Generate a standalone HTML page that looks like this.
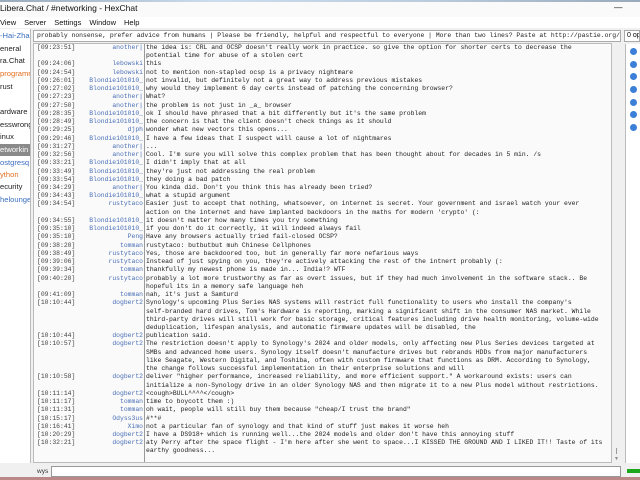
<!DOCTYPE html>
<html><head><meta charset="utf-8"><style>
*{margin:0;padding:0;box-sizing:border-box}
html,body{width:640px;height:480px;overflow:hidden}
body{background:#f0f0f0;font-family:"Liberation Sans",sans-serif;position:relative}
.abs{position:absolute}
#title{left:0;top:0;width:640px;height:17px;background:#fafafa;font-size:8.5px;color:#111;line-height:17px}
#title:before{content:"";position:absolute;left:0;top:0;width:640px;height:2px;background:linear-gradient(90deg,#9ab,#cde,#bcd,#9ab)}
#menu{left:0;top:17px;width:640px;height:11px;background:#fff;font-size:7.5px;line-height:11px;color:#111}
#menu span{margin-right:8px}
#side{left:0;top:29px;width:31px;height:434px;background:#fff;border-right:1px solid #bbb;font-size:7.6px;color:#222;overflow:hidden}
#side div{position:absolute;left:0;height:12px;line-height:12px;white-space:nowrap;width:31px}
#topic{left:33px;top:30px;width:588px;height:12px;background:#fff;border:1px solid #aaa;font-family:"Liberation Mono",monospace;font-size:6.4px;line-height:10px;padding-left:3px;color:#222;white-space:nowrap;overflow:hidden}
#ops{left:624px;top:30px;width:16px;height:12px;background:#fff;border:1px solid #aaa;font-size:7px;line-height:10px;padding-left:2px;white-space:nowrap;overflow:hidden}
#chat{left:33px;top:43px;width:579px;height:420px;background:#fafafa;border:1px solid #bbb}
#sb{left:612px;top:43px;width:10px;height:420px;background:#f0f0f0}
#sep{left:144px;top:44px;width:1px;height:418px;background:#999}
#users{left:625px;top:44px;width:15px;height:419px;background:#fff;border-left:1px solid #bbb}
.dot{position:absolute;left:4px;width:7px;height:7px;border-radius:50%;background:#3b7fd8}
#lines{left:37px;top:44px;width:575px;font-family:"Liberation Mono",monospace;font-size:6.4px;line-height:8.24px;color:#222}
.r{position:relative;height:8.24px}
.t,.n,.m{white-space:pre}
.t{position:absolute;left:0;color:#444}
.n{position:absolute;left:0;width:106px;text-align:right;color:#4a6fb5}
.m{position:absolute;left:109px}
#inp{left:51px;top:466px;width:570px;height:11px;background:#fff;border:1px solid #999}
#nick{left:37px;top:466px;font-size:6.5px;line-height:11px;color:#333}
#green{left:627px;top:469px;width:13px;height:4px;background:#1ca81c}
#task{left:0;top:477px;width:640px;height:3px;background:#b88}
</style></head><body>
<div id="title" class="abs">Libera.Chat / #networking - HexChat<span style="position:absolute;left:614px;top:-1px">—</span></div>
<div id="menu" class="abs"><span>View</span><span>Server</span><span>Settings</span><span>Window</span><span>Help</span></div>
<div id="side" class="abs">
<div style="top:1px;color:#3b6fc0">-Hai-Zhan</div>
<div style="top:14px">eneral</div>
<div style="top:26px">ra.Chat</div>
<div style="top:39px;color:#e07020">programm</div>
<div style="top:52px">rust</div>
<div style="top:77px">ardware</div>
<div style="top:90px">esswrong</div>
<div style="top:102px">inux</div>
<div style="top:115px;background:#8a8a8a;color:#fff">etworkin</div>
<div style="top:128px;color:#3b6fc0">ostgresq</div>
<div style="top:140px;color:#e07020">ython</div>
<div style="top:152px">ecurity</div>
<div style="top:165px;color:#3b6fc0">helounge</div>
</div>
<div id="topic" class="abs">probably nonsense, prefer advice from humans | Please be friendly, helpful and respectful to everyone | More than two lines? Paste at http://pastie.org/</div>
<div id="ops" class="abs">0 op</div>
<div id="chat" class="abs"></div>
<div id="sb" class="abs"><div class="abs" style="left:4px;top:405px;width:1px;height:6px;background:#999"></div><div class="abs" style="left:2px;top:413px;font-size:5px;color:#888">▼</div></div>
<div id="sep" class="abs"></div>
<div id="users" class="abs">
<div class="dot" style="top:4px"></div><div class="dot" style="top:17px"></div><div class="dot" style="top:29px"></div><div class="dot" style="top:42px"></div><div class="dot" style="top:55px"></div><div class="dot" style="top:67px"></div><div class="dot" style="top:80px"></div>
</div>
<div id="lines" class="abs">
<div class="r"><span class="t">[09:23:51]</span><span class="n">another|</span><span class="m">the idea is: CRL and OCSP doesn't really work in practice. so give the option for shorter certs to decrease the</span></div>
<div class="r"><span class="m">potential time for abuse of a stolen cert</span></div>
<div class="r"><span class="t">[09:24:06]</span><span class="n">lebowski</span><span class="m">this</span></div>
<div class="r"><span class="t">[09:24:54]</span><span class="n">lebowski</span><span class="m">not to mention non-stapled ocsp is a privacy nightmare</span></div>
<div class="r"><span class="t">[09:26:01]</span><span class="n">Blondie101010_</span><span class="m">not invalid, but definitely not a great way to address previous mistakes</span></div>
<div class="r"><span class="t">[09:27:02]</span><span class="n">Blondie101010_</span><span class="m">why would they implement 6 day certs instead of patching the concerning browser?</span></div>
<div class="r"><span class="t">[09:27:23]</span><span class="n">another|</span><span class="m">What?</span></div>
<div class="r"><span class="t">[09:27:50]</span><span class="n">another|</span><span class="m">the problem is not just in _a_ browser</span></div>
<div class="r"><span class="t">[09:28:35]</span><span class="n">Blondie101010_</span><span class="m">ok I should have phrased that a bit differently but it's the same problem</span></div>
<div class="r"><span class="t">[09:28:49]</span><span class="n">Blondie101010_</span><span class="m">the concern is that the client doesn't check things as it should</span></div>
<div class="r"><span class="t">[09:29:25]</span><span class="n">djph</span><span class="m">wonder what new vectors this opens...</span></div>
<div class="r"><span class="t">[09:29:46]</span><span class="n">Blondie101010_</span><span class="m">I have a few ideas that I suspect will cause a lot of nightmares</span></div>
<div class="r"><span class="t">[09:31:27]</span><span class="n">another|</span><span class="m">...</span></div>
<div class="r"><span class="t">[09:32:56]</span><span class="n">another|</span><span class="m">Cool. I'm sure you will solve this complex problem that has been thought about for decades in 5 min. /s</span></div>
<div class="r"><span class="t">[09:33:21]</span><span class="n">Blondie101010_</span><span class="m">I didn't imply that at all</span></div>
<div class="r"><span class="t">[09:33:49]</span><span class="n">Blondie101010_</span><span class="m">they're just not addressing the real problem</span></div>
<div class="r"><span class="t">[09:33:54]</span><span class="n">Blondie101010_</span><span class="m">they doing a bad patch</span></div>
<div class="r"><span class="t">[09:34:29]</span><span class="n">another|</span><span class="m">You kinda did. Don't you think this has already been tried?</span></div>
<div class="r"><span class="t">[09:34:43]</span><span class="n">Blondie101010_</span><span class="m">what a stupid argument</span></div>
<div class="r"><span class="t">[09:34:54]</span><span class="n">rustytaco</span><span class="m">Easier just to accept that nothing, whatsoever, on internet is secret. Your government and israel watch your ever</span></div>
<div class="r"><span class="m">action on the internet and have implanted backdoors in the maths for modern 'crypto' (:</span></div>
<div class="r"><span class="t">[09:34:55]</span><span class="n">Blondie101010_</span><span class="m">it doesn't matter how many times you try something</span></div>
<div class="r"><span class="t">[09:35:10]</span><span class="n">Blondie101010_</span><span class="m">if you don't do it correctly, it will indeed always fail</span></div>
<div class="r"><span class="t">[09:35:10]</span><span class="n">Peng</span><span class="m">Have any browsers actually tried fail-closed OCSP?</span></div>
<div class="r"><span class="t">[09:38:20]</span><span class="n">tomman</span><span class="m">rustytaco: butbutbut muh Chinese Cellphones</span></div>
<div class="r"><span class="t">[09:38:49]</span><span class="n">rustytaco</span><span class="m">Yes, those are backdoored too, but in generally far more nefarious ways</span></div>
<div class="r"><span class="t">[09:39:06]</span><span class="n">rustytaco</span><span class="m">Instead of just spying on you, they're actively attacking the rest of the intnert probably (:</span></div>
<div class="r"><span class="t">[09:39:34]</span><span class="n">tomman</span><span class="m">thankfully my newest phone is made in... India!? WTF</span></div>
<div class="r"><span class="t">[09:40:20]</span><span class="n">rustytaco</span><span class="m">probably a lot more trustworthy as far as overt issues, but if they had much involvement in the software stack.. Be</span></div>
<div class="r"><span class="m">hopeful its in a memory safe language heh</span></div>
<div class="r"><span class="t">[09:41:09]</span><span class="n">tomman</span><span class="m">nah, it's just a Samturd</span></div>
<div class="r"><span class="t">[10:10:44]</span><span class="n">dogbert2</span><span class="m">Synology's upcoming Plus Series NAS systems will restrict full functionality to users who install the company's</span></div>
<div class="r"><span class="m">self-branded hard drives, Tom's Hardware is reporting, marking a significant shift in the consumer NAS market. While</span></div>
<div class="r"><span class="m">third-party drives will still work for basic storage, critical features including drive health monitoring, volume-wide</span></div>
<div class="r"><span class="m">deduplication, lifespan analysis, and automatic firmware updates will be disabled, the</span></div>
<div class="r"><span class="t">[10:10:44]</span><span class="n">dogbert2</span><span class="m">publication said.</span></div>
<div class="r"><span class="t">[10:10:57]</span><span class="n">dogbert2</span><span class="m">The restriction doesn't apply to Synology's 2024 and older models, only affecting new Plus Series devices targeted at</span></div>
<div class="r"><span class="m">SMBs and advanced home users. Synology itself doesn't manufacture drives but rebrands HDDs from major manufacturers</span></div>
<div class="r"><span class="m">like Seagate, Western Digital, and Toshiba, often with custom firmware that functions as DRM. According to Synology,</span></div>
<div class="r"><span class="m">the change follows successful implementation in their enterprise solutions and will</span></div>
<div class="r"><span class="t">[10:10:58]</span><span class="n">dogbert2</span><span class="m">deliver "higher performance, increased reliability, and more efficient support." A workaround exists: users can</span></div>
<div class="r"><span class="m">initialize a non-Synology drive in an older Synology NAS and then migrate it to a new Plus model without restrictions.</span></div>
<div class="r"><span class="t">[10:11:14]</span><span class="n">dogbert2</span><span class="m">&lt;cough&gt;BULL^^^^&lt;/cough&gt;</span></div>
<div class="r"><span class="t">[10:11:17]</span><span class="n">tomman</span><span class="m">time to boycott them :)</span></div>
<div class="r"><span class="t">[10:11:31]</span><span class="n">tomman</span><span class="m">oh wait, people will still buy them because "cheap/I trust the brand"</span></div>
<div class="r"><span class="t">[10:15:17]</span><span class="n">Odyss3us</span><span class="m">#**#</span></div>
<div class="r"><span class="t">[10:16:41]</span><span class="n">Ximo</span><span class="m">not a particular fan of synology and that kind of stuff just makes it worse heh</span></div>
<div class="r"><span class="t">[10:20:29]</span><span class="n">dogbert2</span><span class="m">I have a DS918+ which is running well...the 2024 models and older don't have this annoying stuff</span></div>
<div class="r"><span class="t">[10:32:21]</span><span class="n">dogbert2</span><span class="m">aty Perry after the space flight - I'm here after she went to space...I KISSED THE GROUND AND I LIKED IT!! Taste of its</span></div>
<div class="r"><span class="m">earthy goodness...</span></div>
</div>
<div id="nick" class="abs">wys</div>
<div id="inp" class="abs"></div>
<div id="green" class="abs"></div>
<div id="task" class="abs"></div>
</body></html>
